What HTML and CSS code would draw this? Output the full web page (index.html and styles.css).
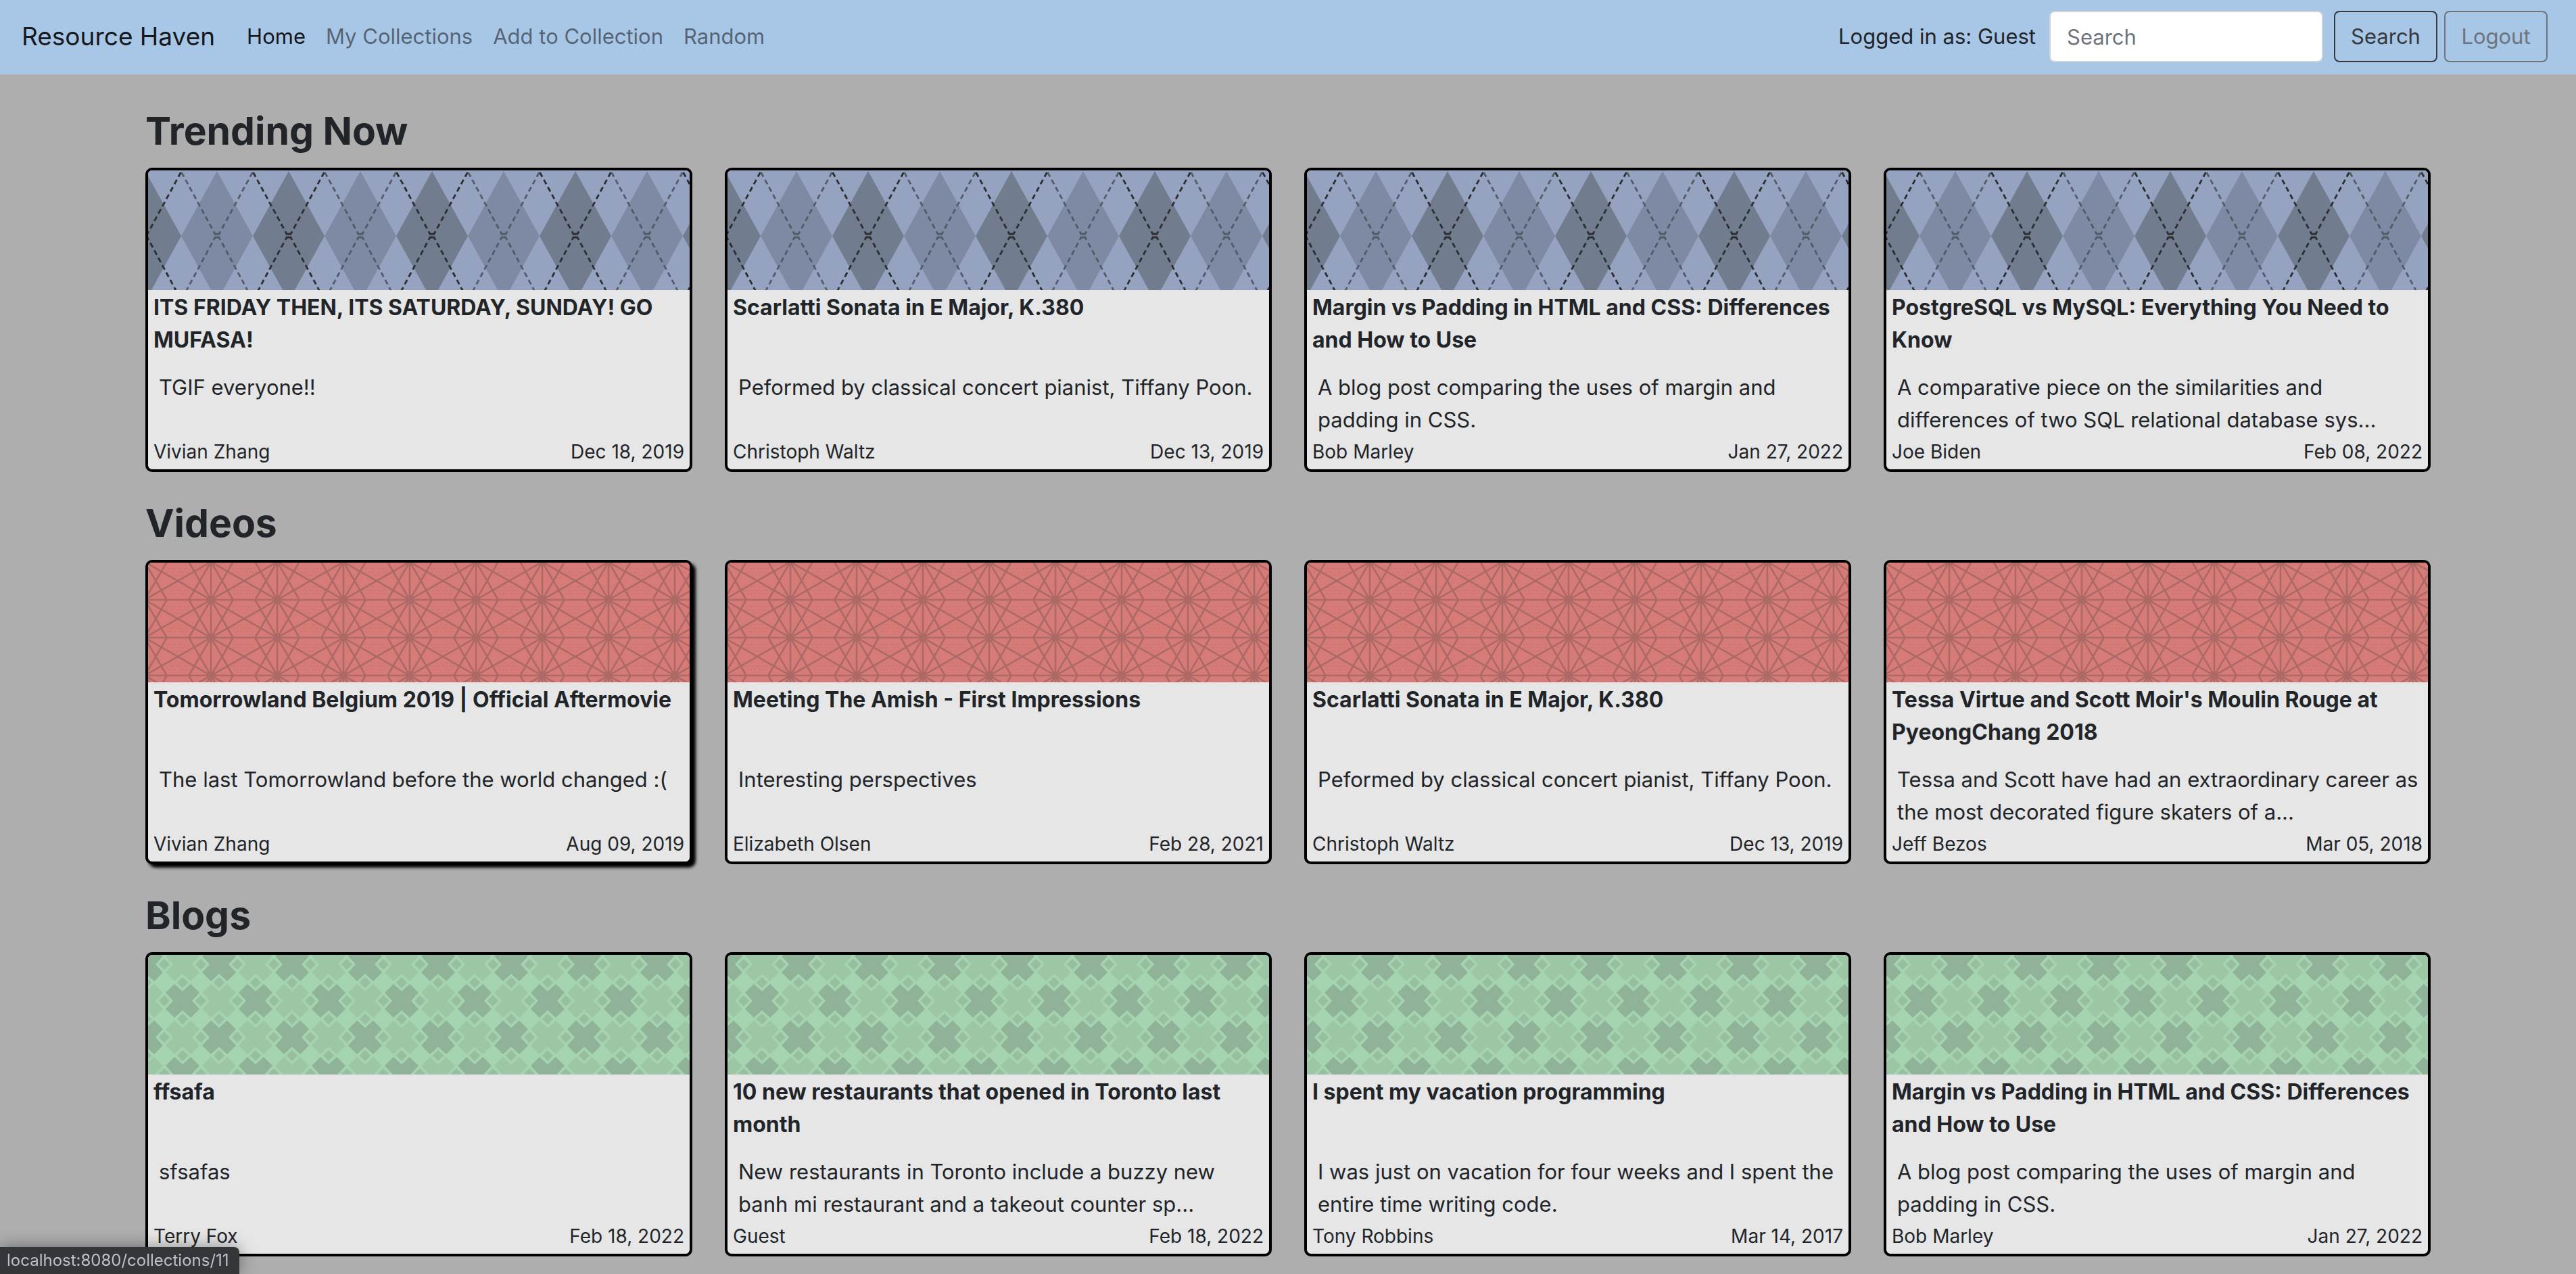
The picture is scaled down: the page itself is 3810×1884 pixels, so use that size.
FILE: index.html
```html
<!DOCTYPE html>
<html lang="en">
<head>
<meta charset="utf-8">
<meta name="viewport" content="width=device-width, initial-scale=1">
<title>Resource Haven</title>
<link rel="stylesheet" href="styles.css">
</head>
<body>
<svg class="pattern-defs" aria-hidden="true" width="0" height="0">
  <defs>
    <pattern id="argyle" patternUnits="userSpaceOnUse" x="49" y="1" width="212" height="192">
      <rect width="212" height="192" fill="#95a3c1"/>
      <path d="M0 96L53 0L106 96L53 192Z" fill="#7e8aa3"/>
      <path d="M106 96L159 0L212 96L159 192Z" fill="#717c8e"/>
      <g fill="none" stroke-width="2.8" stroke-dasharray="7.4 5">
        <path d="M53 93H50L0 1M53 93H56L106 1M53 98H50L0 191M53 98H56L106 191" stroke="#4d545f" stroke-opacity=".9"/>
        <path d="M159 93H156L106 1M159 93H162L212 1M159 98H156L106 191M159 98H162L212 191" stroke="#2c2e31"/>
      </g>
    </pattern>
    <pattern id="stars" patternUnits="userSpaceOnUse" x="44" y="27" width="98" height="56">
      <rect width="98" height="56" fill="#d67b77"/>
      <path d="M2 9H18M80 9H96M1 14H20M78 14H97M3 19H15M84 19H95M1 38H19M80 38H97M3 43H17M82 43H96M1 48H14M86 48H97" fill="none" stroke="#c66f6b" stroke-width="1.4" stroke-dasharray="1.5 3"/>
      <g fill="none" stroke="#ac6965" stroke-width="2.6">
        <path d="M0 28H98M49 0V56M0 0L98 56M98 0L0 56"/>
        <path d="M49 28L65.5 56M49 28L65.5 0M49 28L32.5 56M49 28L32.5 0"/>
        <path d="M81.7 28L65.5 0M81.7 28L65.5 56M16.3 28L32.5 0M16.3 28L32.5 56"/>
      </g>
      <circle cx="49" cy="28" r="6" fill="#ac6965"/>
      <path d="M43 0A6 6 0 0 0 43 0Z" fill="#ac6965"/>
    </pattern>
    <path id="cross" d="M-25 -12L-12 -25L0 -14L12 -25L25 -12L14 0L25 12L12 25L0 14L-12 25L-25 12L-14 0Z"/>
    <path id="gem" d="M0 -9L9 0L0 9L-9 0Z"/>
    <pattern id="plaid" patternUnits="userSpaceOnUse" x="-3" y="14" width="108" height="108">
      <rect width="108" height="108" fill="#a5d5b0"/>
      <g fill="#9dc6a6">
        <use href="#cross" x="54" y="0"/><use href="#cross" x="54" y="108"/>
        <use href="#cross" x="0" y="54"/><use href="#cross" x="108" y="54"/>
      </g>
      <g fill="#8fb298">
        <use href="#cross" x="54" y="54"/>
        <use href="#cross" x="0" y="0"/><use href="#cross" x="108" y="0"/>
        <use href="#cross" x="0" y="108"/><use href="#cross" x="108" y="108"/>
      </g>
      <g fill="#97be9f" stroke="#a3d1ad" stroke-width="1.5">
        <use href="#gem" x="27" y="0"/><use href="#gem" x="81" y="0"/>
        <use href="#gem" x="27" y="54"/><use href="#gem" x="81" y="54"/>
        <use href="#gem" x="27" y="108"/><use href="#gem" x="81" y="108"/>
        <use href="#gem" x="0" y="27"/><use href="#gem" x="0" y="81"/>
        <use href="#gem" x="54" y="27"/><use href="#gem" x="54" y="81"/>
        <use href="#gem" x="108" y="27"/><use href="#gem" x="108" y="81"/>
      </g>
    </pattern>
  </defs>
</svg>

<header class="navbar">
  <a class="brand" href="#">Resource Haven</a>
  <nav class="nav">
    <a class="nav-link active" href="#">Home</a>
    <a class="nav-link" href="#">My Collections</a>
    <a class="nav-link" href="#">Add to Collection</a>
    <a class="nav-link" href="#">Random</a>
  </nav>
  <span class="user">Logged in as: Guest</span>
  <form class="search">
    <input class="search-input" type="search" placeholder="Search" aria-label="Search">
    <button class="btn btn-dark" type="submit">Search</button>
  </form>
  <button class="btn btn-muted" type="button">Logout</button>
</header>

<main class="content">
  <section class="shelf">
    <h2 class="shelf-title">Trending Now</h2>
    <div class="cards">
      <a class="card" href="#">
        <svg class="cover"><rect width="100%" height="100%" fill="url(#argyle)"/></svg>
        <h3 class="card-title">ITS FRIDAY THEN, ITS SATURDAY, SUNDAY! GO MUFASA!</h3>
        <p class="card-text">TGIF everyone!!</p>
        <div class="card-meta"><span>Vivian Zhang</span><time>Dec 18, 2019</time></div>
      </a>
      <a class="card" href="#">
        <svg class="cover"><rect width="100%" height="100%" fill="url(#argyle)"/></svg>
        <h3 class="card-title">Scarlatti Sonata in E Major, K.380</h3>
        <p class="card-text">Peformed by classical concert pianist, Tiffany Poon.</p>
        <div class="card-meta"><span>Christoph Waltz</span><time>Dec 13, 2019</time></div>
      </a>
      <a class="card" href="#">
        <svg class="cover"><rect width="100%" height="100%" fill="url(#argyle)"/></svg>
        <h3 class="card-title">Margin vs Padding in HTML and CSS: Differences and How to Use</h3>
        <p class="card-text">A blog post comparing the uses of margin and padding in CSS.</p>
        <div class="card-meta"><span>Bob Marley</span><time>Jan 27, 2022</time></div>
      </a>
      <a class="card" href="#">
        <svg class="cover"><rect width="100%" height="100%" fill="url(#argyle)"/></svg>
        <h3 class="card-title">PostgreSQL vs MySQL: Everything You Need to Know</h3>
        <p class="card-text">A comparative piece on the similarities and differences of two SQL relational database sys...</p>
        <div class="card-meta"><span>Joe Biden</span><time>Feb 08, 2022</time></div>
      </a>
    </div>
  </section>

  <section class="shelf">
    <h2 class="shelf-title">Videos</h2>
    <div class="cards">
      <a class="card raised" href="#">
        <svg class="cover"><rect width="100%" height="100%" fill="url(#stars)"/></svg>
        <h3 class="card-title">Tomorrowland Belgium 2019 | Official Aftermovie</h3>
        <p class="card-text">The last Tomorrowland before the world changed :(</p>
        <div class="card-meta"><span>Vivian Zhang</span><time>Aug 09, 2019</time></div>
      </a>
      <a class="card" href="#">
        <svg class="cover"><rect width="100%" height="100%" fill="url(#stars)"/></svg>
        <h3 class="card-title">Meeting The Amish - First Impressions</h3>
        <p class="card-text">Interesting perspectives</p>
        <div class="card-meta"><span>Elizabeth Olsen</span><time>Feb 28, 2021</time></div>
      </a>
      <a class="card" href="#">
        <svg class="cover"><rect width="100%" height="100%" fill="url(#stars)"/></svg>
        <h3 class="card-title">Scarlatti Sonata in E Major, K.380</h3>
        <p class="card-text">Peformed by classical concert pianist, Tiffany Poon.</p>
        <div class="card-meta"><span>Christoph Waltz</span><time>Dec 13, 2019</time></div>
      </a>
      <a class="card" href="#">
        <svg class="cover"><rect width="100%" height="100%" fill="url(#stars)"/></svg>
        <h3 class="card-title">Tessa Virtue and Scott Moir's Moulin Rouge at PyeongChang 2018</h3>
        <p class="card-text">Tessa and Scott have had an extraordinary career as the most decorated figure skaters of a...</p>
        <div class="card-meta"><span>Jeff Bezos</span><time>Mar 05, 2018</time></div>
      </a>
    </div>
  </section>

  <section class="shelf">
    <h2 class="shelf-title">Blogs</h2>
    <div class="cards">
      <a class="card" href="#">
        <svg class="cover"><rect width="100%" height="100%" fill="url(#plaid)"/></svg>
        <h3 class="card-title">ffsafa</h3>
        <p class="card-text">sfsafas</p>
        <div class="card-meta"><span>Terry Fox</span><time>Feb 18, 2022</time></div>
      </a>
      <a class="card" href="#">
        <svg class="cover"><rect width="100%" height="100%" fill="url(#plaid)"/></svg>
        <h3 class="card-title">10 new restaurants that opened in Toronto last month</h3>
        <p class="card-text">New restaurants in Toronto include a buzzy new banh mi restaurant and a takeout counter sp...</p>
        <div class="card-meta"><span>Guest</span><time>Feb 18, 2022</time></div>
      </a>
      <a class="card" href="#">
        <svg class="cover"><rect width="100%" height="100%" fill="url(#plaid)"/></svg>
        <h3 class="card-title">I spent my vacation programming</h3>
        <p class="card-text">I was just on vacation for four weeks and I spent the entire time writing code.</p>
        <div class="card-meta"><span>Tony Robbins</span><time>Mar 14, 2017</time></div>
      </a>
      <a class="card" href="#">
        <svg class="cover"><rect width="100%" height="100%" fill="url(#plaid)"/></svg>
        <h3 class="card-title">Margin vs Padding in HTML and CSS: Differences and How to Use</h3>
        <p class="card-text">A blog post comparing the uses of margin and padding in CSS.</p>
        <div class="card-meta"><span>Bob Marley</span><time>Jan 27, 2022</time></div>
      </a>
    </div>
  </section>
</main>

<div class="status" role="status">localhost:8080/collections/11</div>
</body>
</html>
```
FILE: styles.css
```css
*,
*::before,
*::after {
  box-sizing: border-box;
}

body {
  margin: 0;
  background: #aeaeae;
  color: #212529;
  font-family: Inter, "Liberation Sans", sans-serif;
  font-size: 31px;
  line-height: 48px;
}

a {
  color: inherit;
  text-decoration: none;
}

h2,
h3,
p {
  margin: 0;
}

.pattern-defs {
  position: absolute;
}

/* Top bar */
.navbar {
  display: flex;
  align-items: center;
  min-height: 110px;
  padding: 16px 42px 18px 32px;
  background: #a8c6e6;
}

.brand {
  margin-right: 32px;
  color: rgba(0, 0, 0, 0.9);
  font-size: 37px;
}

.nav {
  display: flex;
  margin-right: auto;
}

.nav-link {
  padding: 0 15px;
  color: rgba(0, 0, 0, 0.5);
}

.nav-link.active {
  color: rgba(0, 0, 0, 0.9);
}

.user {
  margin-right: 20px;
}

.search {
  display: flex;
  gap: 16px;
  margin-right: 10px;
}

.search-input {
  width: 405px;
  height: 76px;
  padding: 0 24px;
  border: 2px solid #ced4da;
  border-radius: 8px;
  background: #fff;
  color: #495057;
  font: inherit;
}

.search-input::placeholder {
  color: #6c757d;
  opacity: 1;
}

.btn {
  min-width: 153px;
  height: 76px;
  padding: 0 22px;
  border: 2px solid currentColor;
  border-radius: 8px;
  background: transparent;
  font: inherit;
}

.btn-dark {
  color: #343a40;
}

.btn-muted {
  color: #6c757d;
}

/* Shelves of cards */
.content {
  padding: 8px 215px 26px;
}

.shelf {
  padding-top: 42px;
}

.shelf-title {
  margin-bottom: 20px;
  font-size: 57px;
  font-weight: 700;
  line-height: 68px;
}

.cards {
  display: grid;
  grid-template-columns: repeat(4, 1fr);
  gap: 48px;
}

.card {
  display: flex;
  flex-direction: column;
  overflow: hidden;
  padding-bottom: 5px;
  border: 4px solid #000;
  border-radius: 10px;
  background: #e6e6e6;
}

.card.raised,
.card:hover {
  box-shadow: 5px 5px 4px #000;
}

.cover {
  display: block;
  width: 100%;
  height: 177px;
}

.card-title {
  min-height: 98px;
  margin-bottom: 22px;
  padding: 2px 8px 0;
  font-size: 32px;
  font-weight: 700;
}

.card-text {
  min-height: 96px;
  padding: 0 8px 0 16px;
}

.card-meta {
  display: flex;
  justify-content: space-between;
  padding: 2px 8px 0;
  font-size: 28px;
  line-height: 42px;
}

/* Link preview in the window's corner */
.status {
  position: fixed;
  bottom: 0;
  left: 0;
  padding: 0 15px 0 10px;
  border-top-right-radius: 8px;
  background: #35363a;
  box-shadow: 0 0 24px rgba(0, 0, 0, 0.4);
  color: #bdc1c6;
  font-size: 24px;
  line-height: 40px;
}
```
